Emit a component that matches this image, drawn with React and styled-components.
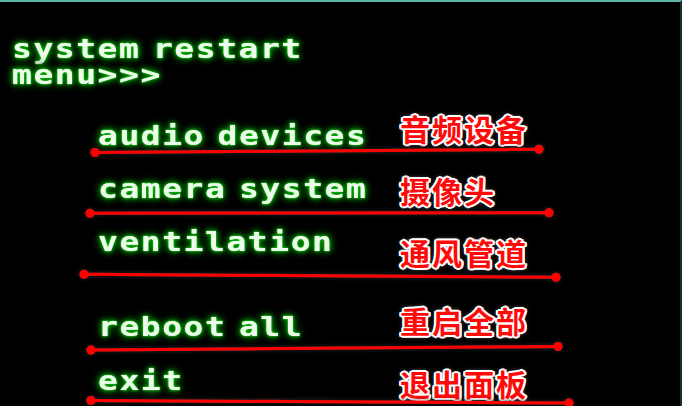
import React from "react";
import styled, { createGlobalStyle } from "styled-components";

const Global = createGlobalStyle`
  html, body { margin: 0; padding: 0; background: #000; }
  body { width: 682px; height: 406px; overflow: hidden; }
`;

const Screen = styled.div`
  position: relative;
  width: 682px;
  height: 406px;
  box-sizing: border-box;
  background: #000;
  border-top: 2px solid #5db7a6;
  border-right: 2px solid #16302d;
  overflow: hidden;
  padding: 34px 0 0 12px;
`;

const glowText = `
  font-family: "DejaVu Sans Mono", "Liberation Mono", monospace;
  font-weight: bold;
  font-size: 26px;
  line-height: 26px;
  letter-spacing: 1.2px;
  word-spacing: -7px;
  white-space: nowrap;
  transform: scaleX(1.27);
  transform-origin: left center;
  color: #eefcec;
  text-shadow:
    0 0 1px #6e6,
    0 0 2px #1b1,
    0 0 4px #0a0,
    0 0 6px #070,
    0 0 8px #050,
    0 0 10px #040,
    0 0 12px #030;
`;

const Title = styled.h1`
  margin: 0;
  ${glowText}
`;

const TitleLine = styled.div`
  height: 26px;
`;

const Menu = styled.div`
  display: flex;
  flex-direction: column;
  margin-top: 25px;
`;

const Row = styled.div`
  display: grid;
  grid-template-columns: 302px auto;
  align-items: start;
  padding-left: 86px;
  margin-top: ${(p) => p.$gap}px;
`;

const Label = styled.div`
  padding-top: ${(p) => p.$offset}px;
  ${glowText}
`;

const Cn = styled.div`
  padding-top: ${(p) => p.$offset}px;
  font-family: "Noto Sans CJK SC", "Noto Sans", sans-serif;
  font-weight: 700;
  font-size: 30px;
  line-height: 30px;
  letter-spacing: 2px;
  color: #ff0a0a;
  white-space: nowrap;
  text-shadow:
    2px 0 0 #fff, -2px 0 0 #fff, 0 2px 0 #fff, 0 -2px 0 #fff,
    1px 1px 0 #fff, -1px -1px 0 #fff, 1px -1px 0 #fff, -1px 1px 0 #fff,
    2px 1px 0 #fff, -2px 1px 0 #fff, 2px -1px 0 #fff, -2px -1px 0 #fff,
    0 0 5px rgba(255, 255, 255, 0.7);
`;

const Overlay = styled.svg`
  position: absolute;
  left: 0;
  top: -2px;
  width: 682px;
  height: 406px;
  pointer-events: none;
`;

const rows = [
  { en: "audio devices", cn: "音频设备", gap: 0, lo: 10, co: 0 },
  { en: "camera system", cn: "摄像头", gap: 26, lo: 1, co: 0 },
  { en: "ventilation", cn: "通风管道", gap: 24, lo: 0, co: 8 },
  { en: "reboot all", cn: "重启全部", gap: 38, lo: 9, co: 0 },
  { en: "exit", cn: "退出面板", gap: 28, lo: 0, co: 0 },
];

const lines = [
  [95, 152.5, 539, 149.3],
  [90, 213.3, 549, 212.7],
  [84, 274.3, 556, 277.3],
  [91, 350, 558, 346.5],
  [91, 400.5, 569, 403],
];

export default function App() {
  return (
    <>
      <Global />
      <Screen>
        <Title>
          <TitleLine>system restart</TitleLine>
          <TitleLine>menu&gt;&gt;&gt;</TitleLine>
        </Title>
        <Menu>
          {rows.map((r) => (
            <Row key={r.en} $gap={r.gap}>
              <Label $offset={r.lo}>{r.en}</Label>
              <Cn $offset={r.co}>{r.cn}</Cn>
            </Row>
          ))}
        </Menu>
        <Overlay viewBox="0 0 682 406">
          <defs>
            <filter id="sh" x="-10%" y="-200%" width="120%" height="500%">
              <feDropShadow dx="0" dy="0" stdDeviation="2" floodColor="#333" floodOpacity="0.9" />
            </filter>
          </defs>
          {lines.map(([x1, y1, x2, y2], i) => (
            <g key={i} filter="url(#sh)">
              <line x1={x1} y1={y1} x2={x2} y2={y2} stroke="#ff0000" strokeWidth="3" />
              <circle cx={x1} cy={y1} r="4.5" fill="#ff0000" />
              <circle cx={x2} cy={y2} r="4.5" fill="#ff0000" />
            </g>
          ))}
        </Overlay>
      </Screen>
    </>
  );
}
